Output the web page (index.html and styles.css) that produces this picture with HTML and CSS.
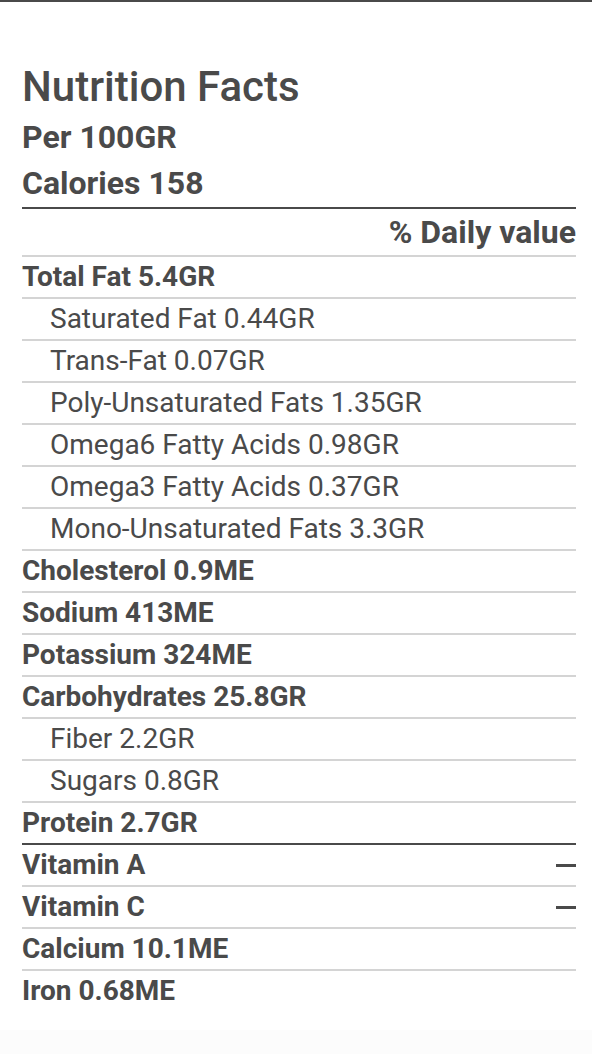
FILE: index.html
```html
<!DOCTYPE html>
<html lang="en">
<head>
  <meta charset="UTF-8" />
  <meta name="viewport" content="width=device-width, initial-scale=1" />
  <title>Nutrition Facts</title>
  <link rel="stylesheet" href="styles.css">
</head>
<body>
  <div class="panel">
    <h1>Nutrition Facts</h1>
    <div class="serving">Per 100GR</div>
    <div class="serving">Calories 158</div>

    <div class="facts">
      <div class="row head"><span></span><span>% Daily value</span></div>
      <div class="row main"><span>Total Fat 5.4GR</span></div>
      <div class="row sub"><span>Saturated Fat 0.44GR</span></div>
      <div class="row sub"><span>Trans-Fat 0.07GR</span></div>
      <div class="row sub"><span>Poly-Unsaturated Fats 1.35GR</span></div>
      <div class="row sub"><span>Omega6 Fatty Acids 0.98GR</span></div>
      <div class="row sub"><span>Omega3 Fatty Acids 0.37GR</span></div>
      <div class="row sub"><span>Mono-Unsaturated Fats 3.3GR</span></div>
      <div class="row main"><span>Cholesterol 0.9ME</span></div>
      <div class="row main"><span>Sodium 413ME</span></div>
      <div class="row main"><span>Potassium 324ME</span></div>
      <div class="row main"><span>Carbohydrates 25.8GR</span></div>
      <div class="row sub"><span>Fiber 2.2GR</span></div>
      <div class="row sub"><span>Sugars 0.8GR</span></div>
      <div class="row main"><span>Protein 2.7GR</span></div>
      <div class="row main divider"><span>Vitamin A</span><span class="dash"></span></div>
      <div class="row main"><span>Vitamin C</span><span class="dash"></span></div>
      <div class="row main"><span>Calcium 10.1ME</span></div>
      <div class="row main last"><span>Iron 0.68ME</span></div>
    </div>
  </div>
</body>
</html>
```

FILE: styles.css
```css
html {
  background: #fcfcfc;
}

body {
  margin: 0;
  font-family: Roboto, 'Liberation Sans', sans-serif;
  color: #4a4a4a;
}

.panel {
  box-sizing: border-box;
  min-height: 1030px;
  background: #ffffff;
  border-top: 2px solid #4a4a4a;
  padding: 62px 16px 18px 22px;
}

h1 {
  font-size: 42px;
  font-weight: 500;
  line-height: 46px;
  margin: 0 0 4px;
}

.serving {
  font-size: 32px;
  font-weight: 700;
  line-height: 46px;
}

.facts {
  border-top: 2px solid #4a4a4a;
  margin-top: 1px;
}

.row {
  display: flex;
  justify-content: space-between;
  align-items: center;
  height: 40px;
  border-bottom: 2px solid #d4d4d4;
  font-size: 28px;
  line-height: 40px;
}

.row.head {
  height: 46px;
  font-weight: 700;
  font-size: 32px;
}

.row.main {
  font-weight: 700;
}

.row.sub {
  font-weight: 400;
  padding-left: 28px;
}

.row.divider {
  border-top: 2px solid #4a4a4a;
  margin-top: -2px;
}

.row.last {
  border-bottom: none;
}

.dash {
  width: 20px;
  height: 3px;
  background: #4a4a4a;
}
```
